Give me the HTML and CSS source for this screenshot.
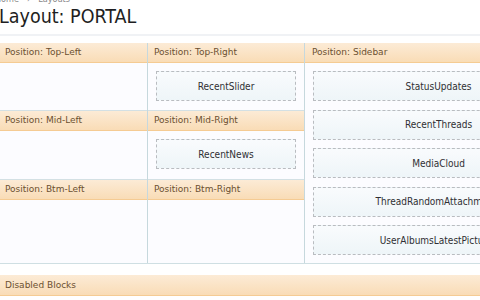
FILE: index.html
```html
<!DOCTYPE html>
<html>
<head>
<meta charset="utf-8">
<link rel="stylesheet" href="styles.css">
</head>
<body>
<div class="page">
  <div class="breadcrumb"><span>Home</span><span class="sep">›</span><span>Layouts</span></div>
  <h1 class="title">Layout: PORTAL</h1>
  <div class="rule"></div>
  <div class="layout">
    <div class="main">
      <div class="row">
        <div class="cell">
          <div class="head">Position: Top-Left</div>
          <div class="body body-1"></div>
        </div>
        <div class="cell cell-right">
          <div class="head">Position: Top-Right</div>
          <div class="body body-1"><div class="block">RecentSlider</div></div>
        </div>
      </div>
      <div class="row">
        <div class="cell">
          <div class="head">Position: Mid-Left</div>
          <div class="body body-2"></div>
        </div>
        <div class="cell cell-right">
          <div class="head">Position: Mid-Right</div>
          <div class="body body-2"><div class="block">RecentNews</div></div>
        </div>
      </div>
      <div class="row">
        <div class="cell">
          <div class="head">Position: Btm-Left</div>
          <div class="body body-3"></div>
        </div>
        <div class="cell cell-right">
          <div class="head">Position: Btm-Right</div>
          <div class="body body-3"></div>
        </div>
      </div>
    </div>
    <div class="sidebar">
      <div class="head">Position: Sidebar</div>
      <div class="body side-body">
        <div class="block">StatusUpdates</div>
        <div class="block">RecentThreads</div>
        <div class="block">MediaCloud</div>
        <div class="block">ThreadRandomAttachments</div>
        <div class="block">UserAlbumsLatestPictures</div>
      </div>
    </div>
  </div>
  <div class="head disabled">Disabled Blocks</div>
</div>
</body>
</html>
```

FILE: styles.css
```css
html, body {
  margin: 0;
  padding: 0;
  background: #ffffff;
  overflow: hidden;
}
body {
  width: 480px;
  height: 300px;
  font-family: "DejaVu Sans Condensed", "DejaVu Sans", sans-serif;
}
.page {
  width: 600px;
  margin-left: -1px;
}
.breadcrumb {
  height: 4px;
  margin-top: -5px;
  font-size: 9px;
  line-height: 9px;
  color: #888;
  display: flex;
  gap: 8px;
  margin-left: -4px;
}
.title {
  margin: 6px 0 0 0;
  height: 23px;
  font-size: 19.5px;
  line-height: 23px;
  font-weight: normal;
  color: #1e1e22;
}
.rule {
  height: 2px;
  margin-top: 6px;
  background: #f0f2f5;
}
.layout {
  display: flex;
  margin-top: 7px;
  width: 573px;
  border-bottom: 1px solid #cfdfe3;
  background: #fcfcff;
}
.main {
  width: 305px;
  display: flex;
  flex-direction: column;
  border-right: 1px solid #c6d8dd;
}
.row {
  display: flex;
}
.cell {
  width: 148px;
  display: flex;
  flex-direction: column;
}
.cell-right {
  width: 156px;
  border-left: 1px solid #c6d8dd;
}
.head {
  height: 19px;
  line-height: 19px;
  padding-left: 6px;
  font-family: "DejaVu Sans", sans-serif;
  font-size: 9px;
  color: #6b5030;
  background: linear-gradient(#fcebd6, #f9dcb6);
  border-bottom: 1px solid #f5cb93;
  white-space: nowrap;
}
.main .row + .row .head {
  border-top: 1px solid #d3e0e4;
}
.body {
  box-sizing: border-box;
  padding: 8px;
}
.body-1 { height: 47px; }
.body-2 { height: 48px; }
.body-3 { height: 63px; }
.sidebar {
  flex: 1;
  display: flex;
  flex-direction: column;
}
.sidebar .head {
  padding-left: 7px;
}
.side-body {
  display: flex;
  flex-direction: column;
  gap: 8.5px;
  padding: 8px 8px 8px 8px;
}
.block {
  box-sizing: border-box;
  height: 30px;
  border: 1px dashed #b9bcc0;
  background: linear-gradient(#f9fbfd, #eef5f8);
  display: flex;
  align-items: center;
  justify-content: center;
  font-size: 10px;
  color: #2f2f33;
  white-space: nowrap;
}
.disabled {
  margin-top: 11px;
  padding-left: 6px;
  height: 20px;
  line-height: 20px;
}
```
